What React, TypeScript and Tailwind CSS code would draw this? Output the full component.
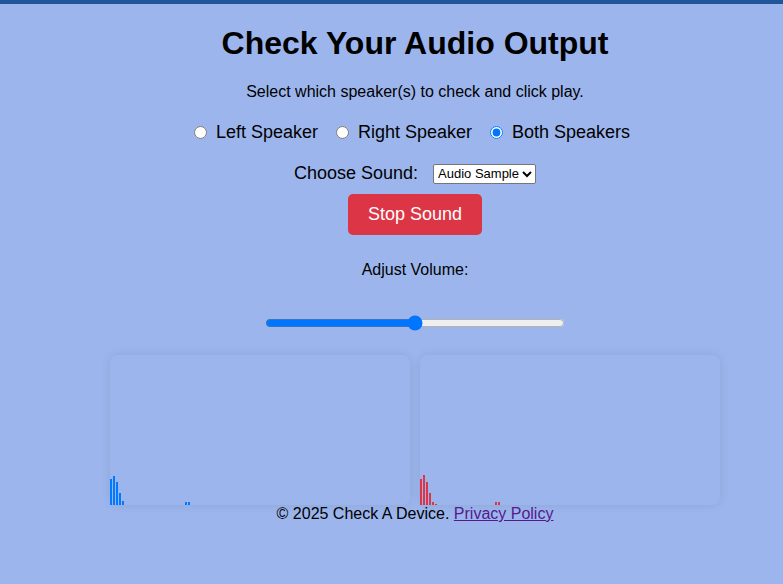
const font = { fontFamily: '"Liberation Sans", Arial, sans-serif' }

// Spectrum snapshot for each channel: bar heights in px, one bar every 3px.
function spectrum(head: number[]) {
  const bars = new Array(100).fill(0)
  head.forEach((h, i) => (bars[i] = h))
  bars[25] = 3
  bars[26] = 3
  return bars
}

const LEFT = spectrum([26, 29, 23, 12, 4])
const RIGHT = spectrum([26, 30, 23, 12, 3, 1])

function Visualizer({ bars, color }: { bars: number[]; color: string }) {
  return (
    <div className="flex h-[150px] w-[300px] items-end rounded-lg shadow-[0_0_10px_rgba(0,0,0,0.1)]">
      {bars.map((h, i) => (
        <div key={i} className={`mr-px w-[2px] shrink-0 ${color}`} style={{ height: h }} />
      ))}
    </div>
  )
}

export default function App() {
  return (
    <div className="min-h-screen bg-[#9cb6ed] text-black" style={font}>
      <div className="h-1 bg-[#1f5699]" />
      <div className="flex flex-col items-center pl-[47px] text-center">
        <h1 className="mt-[21px] text-[32px] font-bold leading-[37px]">Check Your Audio Output</h1>
        <p className="mt-[21px] text-base leading-[18px]">Select which speaker(s) to check and click play.</p>

        <div className="mt-[21px] flex items-center pr-[6px] text-[18px] leading-[21px]">
          {['Left Speaker', 'Right Speaker', 'Both Speakers'].map((s, i) => (
            <label key={s} className="mx-[9px] inline-flex items-center gap-[9px]">
              <input type="radio" name="speaker" defaultChecked={i === 2} className="h-[13px] w-[13px]" />
              {s}
            </label>
          ))}
        </div>

        <div className="mt-5 flex items-center gap-[15px] text-[18px] leading-[21px]">
          <span>Choose Sound:</span>
          <select className="h-5 rounded-[2px] border border-[#767676] bg-white text-[13px] leading-[15px]">
            <option>Audio Sample</option>
          </select>
        </div>

        <button className="mt-[10px] rounded-[5px] bg-[#dc3545] px-5 py-2.5 text-[18px] leading-[21px] text-white">
          Stop Sound
        </button>

        <p className="mt-[26px] text-base leading-[18px]">Adjust Volume:</p>
        <input type="range" defaultValue={50} className="mt-9 h-4 w-[300px] accent-[#0075ff]" />

        <div className="mt-6 flex gap-[10px]">
          <Visualizer bars={LEFT} color="bg-[#007bff]" />
          <Visualizer bars={RIGHT} color="bg-[#dc3545]" />
        </div>

        <footer className="text-base leading-[18px]">
          © 2025 Check A Device.{' '}
          <a href="#" className="text-[#551a8b] underline">
            Privacy Policy
          </a>
        </footer>
      </div>
    </div>
  )
}
